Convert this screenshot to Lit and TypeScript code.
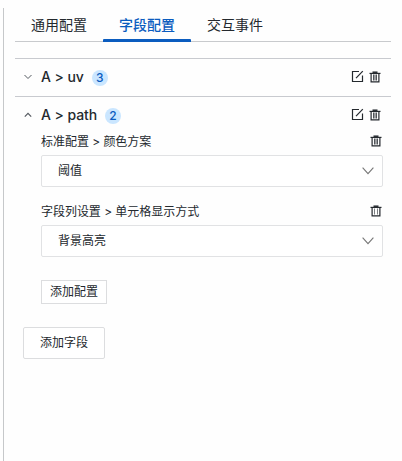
import { LitElement, html, css, svg } from "lit";
import { customElement, property } from "lit/decorators.js";

@customElement("ui-icon")
export class UiIcon extends LitElement {
  static styles = css`
    :host { display: block; flex: none; }
    svg { display: block; fill: none; stroke: currentColor; }
  `;
  @property() name = "";

  private trash(ribs: unknown) {
    return html`<svg width="12" height="12" viewBox="0 0 12 12">
      ${svg`<path d="M2.1 2.5V10.9H9.9V2.5" stroke-width="1.2"/><path d="M0.5 2.4H11.5" stroke-width="1.2"/><path d="M3.5 1.2H8.5" stroke-width="1.5"/>${ribs}`}</svg>`;
  }

  render() {
    switch (this.name) {
      case "edit":
        return html`<svg width="13" height="13" viewBox="0 0 13 13" stroke-width="1.2">
          ${svg`<path d="M8 1.5H1.5V11.5H11.5V5.5"/><path d="M5 8.2L11.8 1.2"/>`}</svg>`;
      case "trash":
        return this.trash(svg`<path d="M4.5 3.5V9.5M7.5 3.5V9.5" opacity=".8"/><path d="M6 3.5V9.5" stroke-width="2" opacity=".45"/>`);
      case "trash-open":
        return this.trash(svg`<path d="M4.5 3.5V9.5M7.5 3.5V9.5" opacity=".6"/>`);
      case "down":
        return html`<svg width="8" height="6" viewBox="0 0 8 6"><path d="M0.5 1L4 4.5L7.5 1"/></svg>`;
      case "up":
        return html`<svg width="8" height="6" viewBox="0 0 8 6"><path d="M0.8 4.7L4 1.3L7.2 4.7" stroke-width="1.2"/></svg>`;
      default:
        return html`<svg width="12" height="8" viewBox="0 0 12 8"><path d="M0.6 0.6L6 6.6L11.4 0.6" stroke-width="1.1"/></svg>`;
    }
  }
}

@customElement("app-root")
export class AppRoot extends LitElement {
  static styles = css`
    :host {
      display: block;
      box-sizing: border-box;
      height: 461px;
      padding: 8px 0 0 3px;
      background: #fefefe;
      color: #24292e;
      font: 12px/18px Inter, "Noto Sans CJK SC", sans-serif;
    }
    .panel {
      box-sizing: border-box;
      height: 453px;
      padding: 0 11px;
      border-left: 1px solid #c6c8ca;
    }
    .tabs {
      display: flex;
      box-sizing: border-box;
      height: 34px;
      border-bottom: 1px solid #c8cacd;
      font-size: 14px;
      line-height: 34px;
    }
    .tab { box-sizing: border-box; width: 88px; height: 34px; text-align: center; }
    .active { position: relative; color: #0b5cbf; font-weight: 500; }
    .active::after {
      content: "";
      position: absolute;
      left: 0;
      right: 0;
      bottom: 0;
      height: 3px;
      border-radius: 1px 1px 0 0;
      background: #0b5cbf;
    }
    .fields { margin-top: 16px; }
    .head {
      display: flex;
      align-items: center;
      box-sizing: border-box;
      height: 38px;
      padding: 0 10px 1px 9px;
      border-top: 1px solid #c8cacf;
    }
    .arrow { color: #555a60; margin: 0 9px 1px 0; }
    .name { font-size: 14px; font-weight: 500; line-height: 20px; letter-spacing: -0.08px; margin-bottom: 1px; }
    .badge {
      width: 16px;
      height: 16px;
      margin: 1px 0 0 8px;
      border-radius: 8px;
      background: #cae6ff;
      color: #0b5cbf;
      font-size: 12px;
      font-weight: 500;
      line-height: 16px;
      text-align: center;
    }
    .tools { display: flex; align-items: center; gap: 5px; margin: 0 0 1px auto; }
    .body { display: flex; flex-direction: column; align-items: flex-start; padding: 0 8px 0 26px; }
    .label {
      display: flex;
      align-items: center;
      justify-content: space-between;
      align-self: stretch;
      box-sizing: border-box;
      height: 21px;
      padding: 0 1px 5px 0;
      letter-spacing: -0.04px;
    }
    .label ui-icon { margin-bottom: 2px; }
    .select {
      display: flex;
      align-items: center;
      justify-content: space-between;
      align-self: stretch;
      box-sizing: border-box;
      height: 32px;
      margin-bottom: 17px;
      padding: 0 8px 0 16px;
      border: 1px solid #e1e2e4;
      border-radius: 2px;
      background: #fff;
    }
    .caret { color: #777; }
    .button {
      display: flex;
      align-items: center;
      justify-content: center;
      box-sizing: border-box;
      border: 1px solid #dcdddf;
      background: #fff;
    }
    .small { width: 66px; height: 24px; margin-top: 6px; }
    .large { width: 82px; height: 32px; margin: 23px 0 0 8px; border-radius: 2px; }
  `;

  private head(name: string, count: number, open: boolean) {
    return html`<div class="head">
      <ui-icon class="arrow" name=${open ? "up" : "down"}></ui-icon>
      <span class="name">${name}</span><span class="badge">${count}</span>
      <span class="tools"><ui-icon name="edit"></ui-icon><ui-icon name="trash"></ui-icon></span>
    </div>`;
  }

  private setting(label: string, value: string, icon: string) {
    return html`<div class="label"><span>${label}</span><ui-icon name=${icon}></ui-icon></div>
      <div class="select"><span>${value}</span><ui-icon class="caret" name="caret"></ui-icon></div>`;
  }

  render() {
    return html`<div class="panel">
      <div class="tabs">
        <div class="tab">通用配置</div>
        <div class="tab active">字段配置</div>
        <div class="tab">交互事件</div>
      </div>
      <div class="fields">
        ${this.head("A > uv", 3, false)}
        ${this.head("A > path", 2, true)}
        <div class="body">
          ${this.setting("标准配置 > 颜色方案", "阈值", "trash")}
          ${this.setting("字段列设置 > 单元格显示方式", "背景高亮", "trash-open")}
          <div class="button small">添加配置</div>
        </div>
      </div>
      <div class="button large">添加字段</div>
    </div>`;
  }
}
